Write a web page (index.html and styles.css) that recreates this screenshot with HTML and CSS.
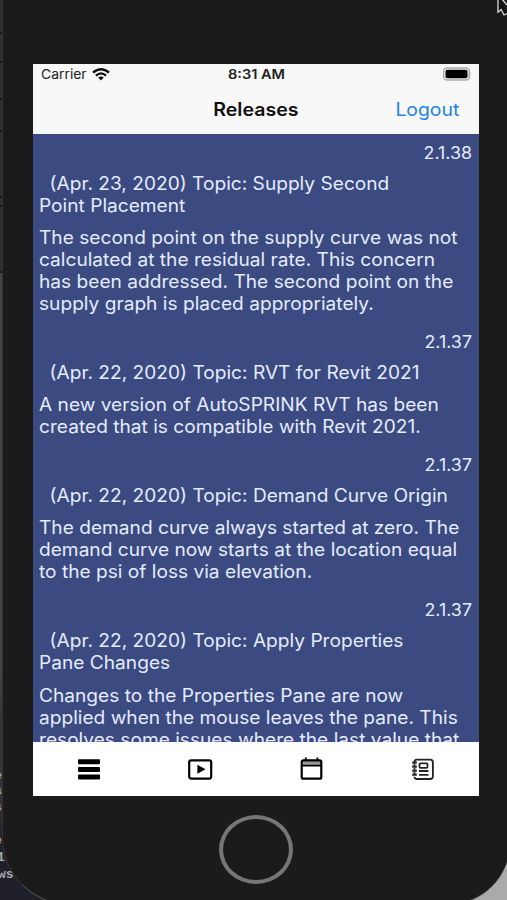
FILE: index.html
```
<!DOCTYPE html>
<html lang="en">
<head>
<meta charset="utf-8">
<title>Releases</title>
<link rel="stylesheet" href="styles.css">
</head>
<body>
<div class="desktop">
  <div class="behind">
    <i class="tick t1"></i><i class="tick t2"></i><i class="tick t3"></i><i class="tick t4"></i><i class="tick t5"></i><i class="tick t6"></i><i class="tick t7"></i>
    <span class="frag f1">e</span><span class="frag f2">a</span><span class="frag f3">s</span><span class="frag f4">e</span><span class="frag f5">1</span><span class="frag f6">ws</span>
  </div>
  <div class="phone">
    <div class="screen">
      <header class="top">
        <div class="status">
          <div class="carrier"><span>Carrier</span>
            <svg width="18" height="13" viewBox="0 0 18 13"><g fill="none" stroke="#111" stroke-width="2.3"><path d="M1 4.7Q9-2.2 17 4.7"/><path d="M3.9 7.6Q9 3.2 14.1 7.6"/></g><path d="M6.2 9.6Q9 7.3 11.8 9.6L9 12.5Z" fill="#111"/></svg>
          </div>
          <div class="time">8:31 AM</div>
          <svg class="battery" width="30" height="14" viewBox="0 0 30 14"><rect x=".7" y=".9" width="25.6" height="12" rx="3.5" fill="#f7f7f7" stroke="#aaa" stroke-width="1.5"/><rect x="2.5" y="2.7" width="22" height="8.6" rx="1.8"/><path d="M27.6 5q1.6 2 0 4z" fill="#aaa"/></svg>
        </div>
        <div class="nav"><h1>Releases</h1><a class="logout">Logout</a></div>
      </header>
      <main class="list">
        <article class="item"><div class="version">2.1.38</div><h2>(Apr. 23, 2020) Topic: Supply Second<br>Point Placement</h2><p>The second point on the supply curve was not<br>calculated at the residual rate. This concern<br>has been addressed. The second point on the<br>supply graph is placed appropriately.</p></article>
        <article class="item"><div class="version">2.1.37</div><h2>(Apr. 22, 2020) Topic: RVT for Revit 2021</h2><p>A new version of AutoSPRINK RVT has been<br>created that is compatible with Revit 2021.</p></article>
        <article class="item"><div class="version">2.1.37</div><h2>(Apr. 22, 2020) Topic: Demand Curve Origin</h2><p>The demand curve always started at zero. The<br>demand curve now starts at the location equal<br>to the psi of loss via elevation.</p></article>
        <article class="item"><div class="version">2.1.37</div><h2>(Apr. 22, 2020) Topic: Apply Properties<br>Pane Changes</h2><p>Changes to the Properties Pane are now<br>applied when the mouse leaves the pane. This<br>resolves some issues where the last value that</p></article>
      </main>
      <nav class="tabs">
        <svg width="26" height="26" viewBox="0 0 26 26"><g fill="#000"><rect x="2" y="3.2" width="22" height="5" rx="1"/><rect x="2" y="10.9" width="22" height="5" rx="1"/><rect x="2" y="18.6" width="22" height="5" rx="1"/></g></svg>
        <svg width="26" height="26" viewBox="0 0 26 26"><rect x="2.2" y="4.4" width="22" height="18.2" rx="2" fill="none" stroke="#000" stroke-width="2.2"/><path d="M10.4 8.8L18.5 13.3L10.4 17.8Z"/></svg>
        <svg width="26" height="26" viewBox="0 0 26 26"><path d="M4 5H22V9H4Z" fill="#999"/><rect x="2.7" y="4.4" width="19.6" height="18.3" rx="1.8" fill="none" stroke="#000" stroke-width="2.2"/><path d="M3 9.6H22M6.8 1.4V5M18.4 1.4V5" fill="none" stroke="#000" stroke-width="1.9"/></svg>
        <svg width="26" height="26" viewBox="0 0 26 26"><g fill="none" stroke="#222" stroke-width="1.8"><path d="M4.5 5.9Q4.5 3.7 7 3.7H20Q22.9 3.7 22.9 6.4V20.2Q22.9 23 20 23H7Q4.5 23 4.5 20.8"/><path d="M4.5 7.9V9.4M4.5 11.9V13.4M4.5 15.9V17.4"/><rect x="9.5" y="7.4" width="8" height="4.4" rx="1"/><path d="M9 15H18.5M9 18.8H18.5"/><path d="M2.2 6.6H6.8M2.2 10.6H6.8M2.2 14.6H6.8M2.2 18.7H6.8" stroke-width="2.2"/></g></svg>
      </nav>
    </div>
    <div class="home"></div>
  </div>
  <svg class="cursor" width="11" height="17" viewBox="0 0 11 17"><path d="M2-6V12.2L5.2 9.5L8 15L11 13.5M6-1L11 5" fill="#111" stroke="#ddd" stroke-width="1.3"/></svg>
</div>
</body>
</html>
```
FILE: styles.css
```
* { box-sizing: border-box; }
body { margin: 0; font-family: Inter, "Liberation Sans", sans-serif; }
.desktop { position: relative; width: 507px; height: 900px; overflow: hidden; background: linear-gradient(90deg, #24242a 0 50%, #aaa 95%); }
.behind { position: absolute; left: 0; top: 0; width: 40px; height: 900px; background: linear-gradient(#303030 0 270px, #444 272px 670px, #353538 720px 800px, #20202a 840px); }
.tick { position: absolute; left: 0; width: 4px; height: 2px; background: #151515; }
.t1 { top: 32px; } .t2 { top: 61px; } .t3 { top: 98px; } .t4 { top: 130px; } .t5 { top: 196px; } .t6 { top: 205px; } .t7 { top: 271px; }
.frag { position: absolute; left: -6px; font: bold 13px "Liberation Mono", monospace; line-height: 14px; color: #aaa; }
.f1 { top: 769px; } .f2 { top: 784px; } .f3 { top: 801px; } .f4 { top: 834px; }
.f5 { top: 851px; left: -3px; } .f6 { top: 868px; left: -2px; }
.phone { position: relative; width: 508px; height: 905px; margin-left: 2px; padding: 64px 0 0 31px; background: #1b1b1b; border-left: 1px solid #333; border-bottom: 1px solid #555; border-radius: 0 0 62px 68px; }
.screen { display: flex; flex-direction: column; width: 446px; height: 732px; margin-left: -1px; overflow: hidden; background: #3b4a80; }
.top { flex: none; height: 70px; background: #f8f8f8; }
.status { display: grid; grid-template-columns: 1fr auto 1fr; align-items: center; height: 20px; padding: 0 6px 0 8px; font-size: 13px; color: #222; }
.carrier { display: flex; align-items: center; gap: 8px; }
.carrier span { transform: scaleX(1.07); transform-origin: left; }
.time { font-weight: 600; transform: translateX(-1px) scaleX(1.12); }
.battery { justify-self: end; }
.nav { display: grid; grid-template-columns: 1fr auto 1fr; align-items: center; height: 49px; }
.nav h1 { grid-column: 2; margin: 0; font-size: 18.3px; font-weight: 600; color: #111; transform: scaleX(1.07); }
.logout { justify-self: end; margin-right: 20px; font-size: 18.3px; color: #2384e8; transform: scaleX(1.06); transform-origin: right; }
.list { flex: 1; min-height: 0; overflow: hidden; padding: 7.6px 6px 0; color: #e4ebff; font-size: 18.2px; line-height: 22.1px; white-space: nowrap; }
.version { text-align: right; font-size: 17px; transform: translateX(-1px) scaleX(1.05); transform-origin: right; }
.item { margin-bottom: 16.6px; }
.item h2 { margin: 8px 0 10.1px; font-size: inherit; font-weight: 400; text-indent: 10px; transform: scaleX(1.052); transform-origin: left; }
.item p { margin: 0; transform: scaleX(1.052); transform-origin: left; }
.tabs { flex: none; display: grid; grid-template-columns: repeat(4, 1fr); justify-items: center; height: 54px; padding-top: 14px; background: #fff; }
.home { width: 74px; height: 69px; margin: 19px 0 0 185px; border: 4px solid #777; border-radius: 50%; }
.cursor { position: absolute; right: 0; top: 0; }
```
